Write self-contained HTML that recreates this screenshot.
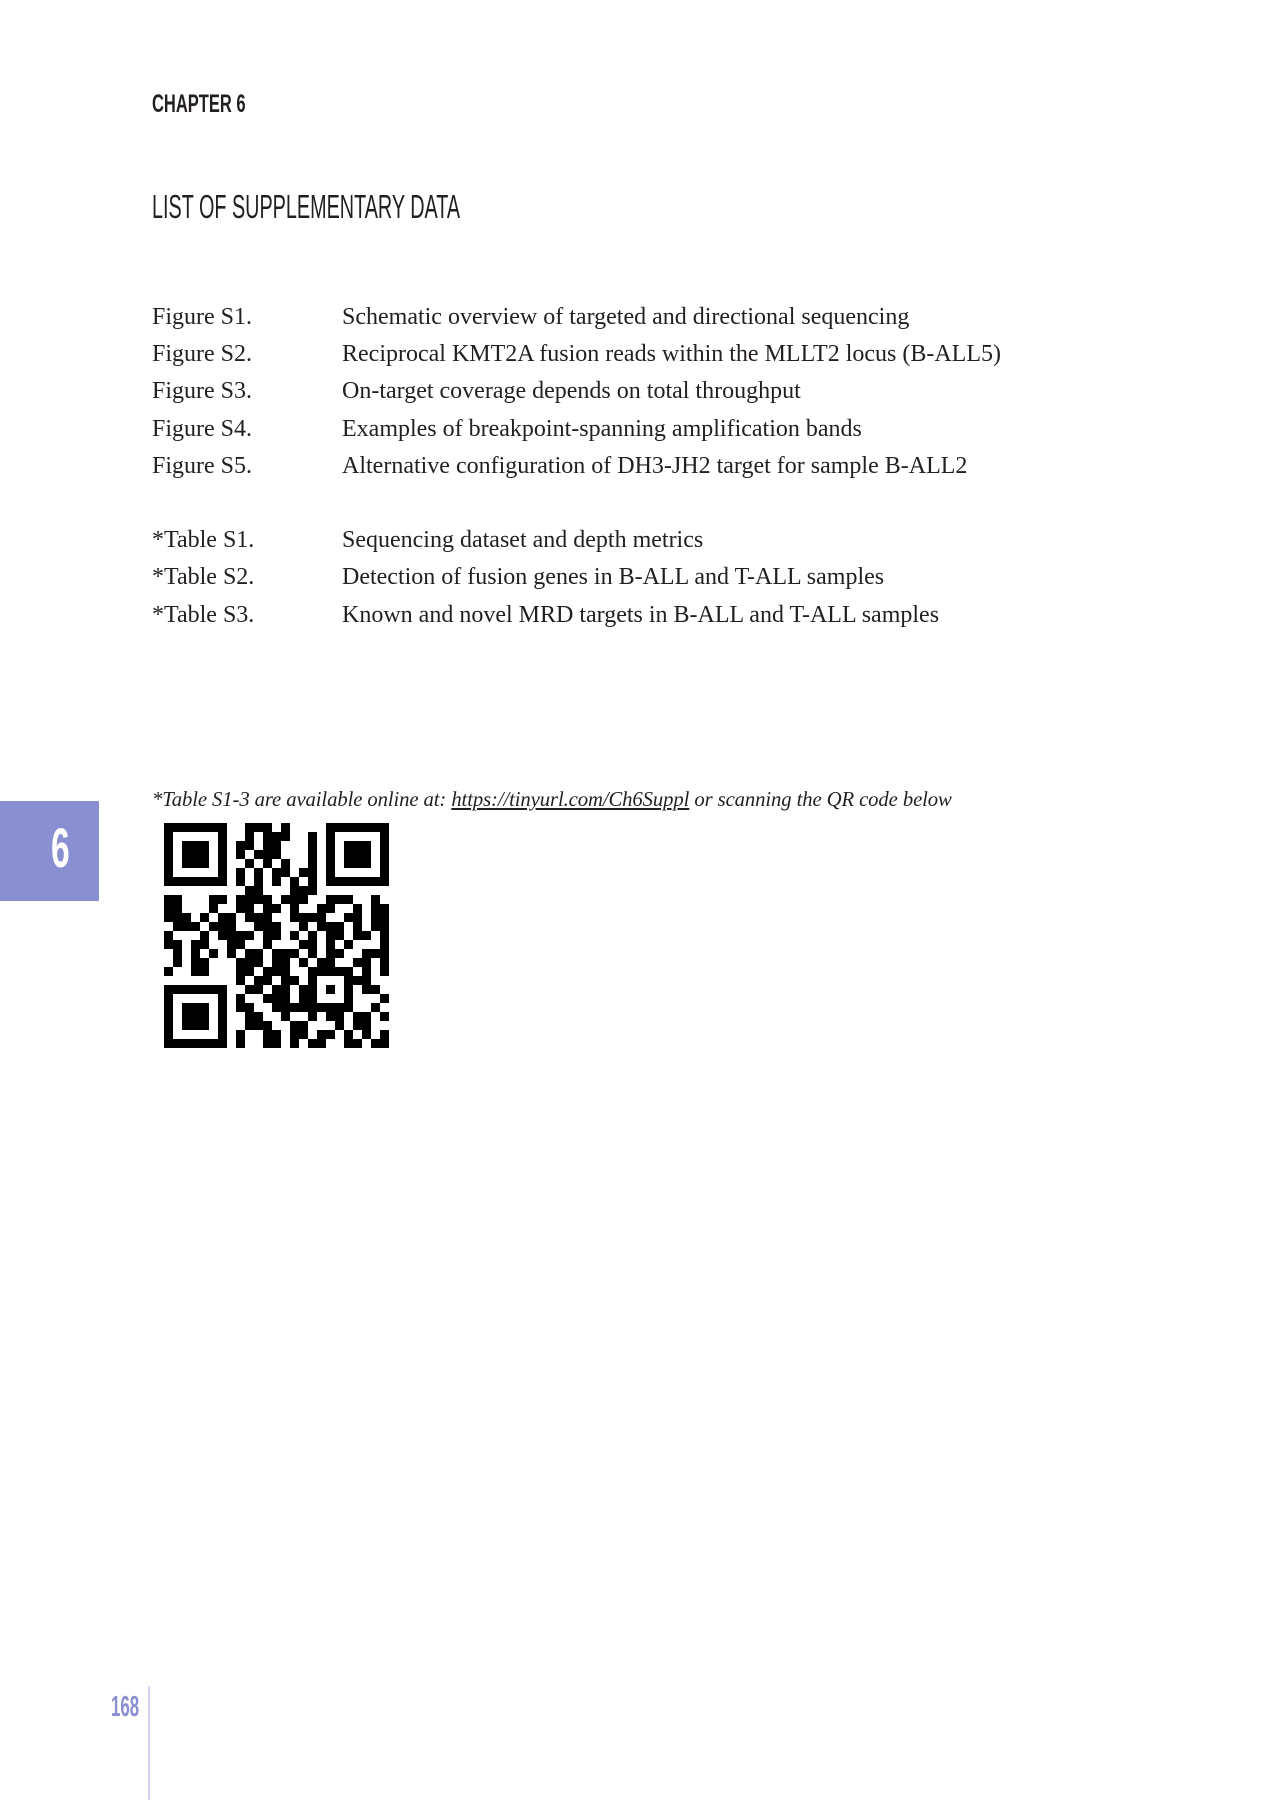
<!DOCTYPE html>
<html><head><meta charset="utf-8"><style>
html,body{margin:0;padding:0;background:#fff;}
body{width:1274px;height:1800px;position:relative;overflow:hidden;font-family:"Liberation Serif",serif;color:#231f20;}
.a{position:absolute;white-space:nowrap;}
.h1{left:152px;top:89px;font-family:"Liberation Sans",sans-serif;font-weight:bold;font-size:25px;line-height:30px;transform:scaleX(0.66);transform-origin:left top;}
.h2{left:152px;top:189px;font-family:"Liberation Sans",sans-serif;font-size:33px;line-height:36px;transform:scaleX(0.6);transform-origin:left top;color:#231f20;}
.r{font-size:24px;line-height:30px;letter-spacing:0px;}
.c1{left:152px}.c2{left:342px}
</style></head><body>
<div class="a h1">CHAPTER 6</div>
<div class="a h2">LIST OF SUPPLEMENTARY DATA</div>

<div class="a r c1" style="top:302px">Figure S1.</div><div class="a r c2" style="top:302px">Schematic overview of targeted and directional sequencing</div>
<div class="a r c1" style="top:339px">Figure S2.</div><div class="a r c2" style="top:339px">Reciprocal KMT2A fusion reads within the MLLT2 locus (B-ALL5)</div>
<div class="a r c1" style="top:376px">Figure S3.</div><div class="a r c2" style="top:376px">On-target coverage depends on total throughput</div>
<div class="a r c1" style="top:414px">Figure S4.</div><div class="a r c2" style="top:414px">Examples of breakpoint-spanning amplification bands</div>
<div class="a r c1" style="top:451px">Figure S5.</div><div class="a r c2" style="top:451px">Alternative configuration of DH3-JH2 target for sample B-ALL2</div>
<div class="a r c1" style="top:525px">*Table S1.</div><div class="a r c2" style="top:525px">Sequencing dataset and depth metrics</div>
<div class="a r c1" style="top:562px">*Table S2.</div><div class="a r c2" style="top:562px">Detection of fusion genes in B-ALL and T-ALL samples</div>
<div class="a r c1" style="top:600px">*Table S3.</div><div class="a r c2" style="top:600px">Known and novel MRD targets in B-ALL and T-ALL samples</div>

<div class="a" style="left:152px;top:787px;font-size:20.7px;line-height:26px;font-style:italic;letter-spacing:-0.1px;">*Table S1-3 are available online at: <span style="text-decoration:underline">https://tinyurl.com/Ch6Suppl</span> or scanning the QR code below</div>

<div class="a" style="left:0;top:801px;width:99px;height:100px;background:#8a8fd2;"></div>
<div class="a" style="left:51px;top:819px;color:#fff;font-family:'Liberation Sans',sans-serif;font-weight:bold;font-size:56px;line-height:58px;transform:scaleX(0.6);transform-origin:left top;">6</div>

<svg class="a" style="left:164px;top:823px" width="225" height="225" viewBox="0 0 25 25" shape-rendering="crispEdges" id="qr"></svg>

<div class="a" style="left:111px;top:1693px;color:#8a8fd2;font-family:'Liberation Sans',sans-serif;font-weight:bold;font-size:29px;line-height:28px;transform:scaleX(0.58);transform-origin:left top;">168</div>
<div class="a" style="left:148px;top:1686px;width:2px;height:114px;background:#d3d5f0;"></div>

<script>
var rows=[
"1111111"+"00111010000"+"1111111",
"1000001"+"00101110010"+"1000001",
"1011101"+"01101100010"+"1011101",
"1011101"+"01011100010"+"1011101",
"1011101"+"00101010010"+"1011101",
"1000001"+"01010110110"+"1000001",
"1111111"+"01010101010"+"1111111",
"00000000"+"0110001110"+"0000000",
"1100011011110111001110010",
"1100010011011010011001011",
"1110101101110011110011011",
"0111011100111001011101011",
"1000101111011010101101101",
"1101100110010001101010001",
"0101010101101110101100111",
"0101100011101101011001101",
"10011000"+"11011100"+"11111"+"0101",
"00000000"+"10110110"+"10001"+"1100",
"1111111"+"0"+"01101101"+"10101"+"0110",
"1000001"+"0"+"10011101"+"10001"+"0001",
"1011101"+"0"+"11001111"+"11111"+"0010",
"1011101"+"0"+"01100100"+"10110"+"1101",
"1011101"+"0"+"01110011"+"00010"+"1100",
"1000001"+"0"+"10011011"+"01101"+"0101",
"1111111"+"0"+"10011010"+"11001"+"1011"];
var d="";
for(var y=0;y<25;y++)for(var x=0;x<25;x++)if(rows[y][x]==="1")d+="M"+x+" "+y+"h1v1h-1z";
document.getElementById("qr").innerHTML='<path fill="#000" d="'+d+'"/>';
</script>
</body></html>
